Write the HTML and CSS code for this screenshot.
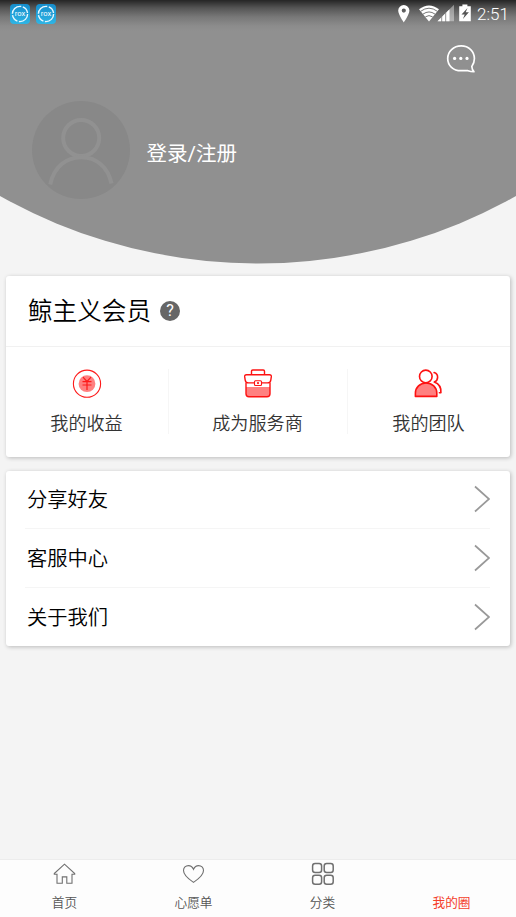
FILE: index.html
```html
<!DOCTYPE html>
<html lang="zh-CN">
<head>
<meta charset="utf-8">
<meta name="viewport" content="width=device-width, initial-scale=1">
<title>我的圈</title>
<link rel="stylesheet" href="styles.css">
</head>
<body>
<header class="hero">
  <div class="status">
    <div class="apps">
      <span class="app"><svg viewBox="0 0 20 20"><circle class="ring" cx="10" cy="10" r="7.6"/><text x="10" y="12.300" text-anchor="middle">rox</text></svg></span>
      <span class="app"><svg viewBox="0 0 20 20"><circle class="ring" cx="10" cy="10" r="7.6"/><text x="10" y="12.300" text-anchor="middle">rox</text></svg></span>
    </div>
    <svg class="signals" width="76" height="20" viewBox="396 4 76 20" fill="#fff">
      <path fill-rule="evenodd" d="M403.800 5a5.600 5.600 0 0 0-5.600 5.600c0 4.200 5.600 11.800 5.600 11.800s5.600-7.600 5.600-11.800a5.600 5.600 0 0 0-5.600-5.600zm0 3.500a2.100 2.100 0 1 1 0 4.200 2.100 2.100 0 0 1 0-4.200z"/>
      <path d="M419 9.300Q429 1.700 439 9.300L429 21.400z"/>
      <path d="M420.500 11.400Q429 5 437.500 11.400M423 14.100Q429 9.800 435 14.100M425.400 16.800Q429 14.400 432.600 16.800" fill="none" stroke="#777" stroke-width="1"/>
      <path d="M437.500 21.300L454 4.800V21.300z" opacity=".4"/>
      <path d="M437.500 21.300L449.500 9.300V21.300z"/>
      <path d="M441.700 16v6M445.700 12v10" stroke="#777" stroke-width=".8"/>
      <path d="M462.400 4.500h5v1.700h3.400v15.100h-11.600V6.200h3.200z"/>
      <path d="M467.500 8l-6 6.500h3.200l-1.800 4.500 6-6.700h-3.200z" fill="#555"/>
    </svg>
    <span class="clock">2:51</span>
  </div>
  <div class="actions">
    <svg width="30" height="30" viewBox="446 44 30 30" fill="none" stroke="#fff" stroke-width="1.700" stroke-linecap="round" stroke-linejoin="round">
      <path d="M471.800 66.500C473.600 64.200 474.400 61.500 474.400 58.600c0-7.200-5.500-12.700-13.200-12.700s-13.500 5.500-13.500 12.600 5.600 12.200 13.300 12.200h7q2.500 1 5.900 1-1.800-1.800-2.100-5.200z"/>
      <g fill="#fff" stroke="none"><circle cx="454.600" cy="58.400" r="1.600"/><circle cx="460.800" cy="58.400" r="1.600"/><circle cx="467" cy="58.400" r="1.600"/></g>
    </svg>
  </div>
  <div class="profile">
    <svg class="avatar" width="98" height="98" viewBox="0 0 98 98" fill="none" stroke="#919191" stroke-width="4">
      <circle cx="49" cy="49" r="49" fill="#888" stroke="none"/>
      <circle cx="49.200" cy="37" r="18"/>
      <path d="M18.200 83.500C22 66 34 56.300 49.200 56.300S76 66 79.500 82.500"/>
    </svg>
    <span class="login">登录/注册</span>
  </div>
</header>

<main>
  <section class="card member">
    <div class="member-head">
      <h1>鲸主义会员</h1>
      <span class="help">?</span>
    </div>
    <div class="member-items">
      <div class="item">
        <svg width="30" height="30" viewBox="0 0.300 30 30" fill="none" stroke="#fd1a1a">
          <circle cx="15" cy="15" r="13.600" stroke-width="1.100"/>
          <circle cx="15" cy="15" r="8.400" fill="#ff8080" stroke="none"/>
          <path d="M11 8.500l4 4.300 4-4.300M10.500 13h9M10.500 16.300h9M15 12.800v8.400" stroke-width="1.200"/>
        </svg>
        <span>我的收益</span>
      </div>
      <div class="item wide">
        <svg width="30" height="30" viewBox="0 0.500 30 30" fill="none" stroke="#fd1212" stroke-width="1.400" stroke-linejoin="round">
          <path d="M3 18.500h24v6.800a3 3 0 0 1-3 3H6a3 3 0 0 1-3-3z" fill="#ff8080" stroke="none"/>
          <path d="M8.500 6.200V2.800q0-1.300 1.300-1.300h10.400q1.300 0 1.300 1.300v3.400M3 14v11.300a3 3 0 0 0 3 3h18a3 3 0 0 0 3-3V14"/>
          <path d="M3.500 6.200h23q2 0 1.800 2.200l-.5 3.200q-.4 2.800-3.400 2.800H5.600q-3 0-3.400-2.800l-.5-3.200q-.2-2.200 1.800-2.200z"/>
          <rect x="11.500" y="12.300" width="7" height="4.700" rx="1" fill="#fff" stroke-width="1.100"/>
          <circle cx="15" cy="14.600" r="1.100" fill="#fd1212" stroke="none"/>
        </svg>
        <span>成为服务商</span>
      </div>
      <div class="item">
        <svg width="30" height="30" viewBox="1.200 0.600 30 30" fill="none" stroke="#fd1212" stroke-width="1.600" stroke-linecap="round" stroke-linejoin="round">
          <path d="M2.600 28v-3.200c0-5.800 4.700-10.200 10.700-10.200S24 19 24 24.800V28z" fill="#ff8080"/>
          <circle cx="13" cy="8" r="6.300" fill="#fff"/>
          <path d="M21.300 4.200c4.800 1.400 4.500 7.700.2 9.500 4.500 1.700 7 5.600 6.600 10.600h-1.500"/>
        </svg>
        <span>我的团队</span>
      </div>
    </div>
  </section>

  <section class="card list">
    <div class="row"><span>分享好友</span><svg class="chevron" viewBox="0 0 18 28"><path d="M3 1.500L17 14 3 26.500"/></svg></div>
    <div class="row"><span>客服中心</span><svg class="chevron" viewBox="0 0 18 28"><path d="M3 1.500L17 14 3 26.500"/></svg></div>
    <div class="row"><span>关于我们</span><svg class="chevron" viewBox="0 0 18 28"><path d="M3 1.500L17 14 3 26.500"/></svg></div>
  </section>
</main>

<nav class="tabs">
  <div class="tab">
    <svg viewBox="0.500 0 24 24"><path d="M1.800 11.500L12 2.200l10.200 9.300v.8h-2.700v8.900h-5.200v-6.300H9.800v6.300H4.500v-8.900H1.800z"/></svg>
    <span>首页</span>
  </div>
  <div class="tab">
    <svg viewBox="0.500 0 24 24"><path d="M12 20.400C6.500 16.800 2 13 2 8.600 2 5.600 4.200 3.600 6.900 3.600c2.300 0 4.100 1.400 5.100 3.700 1-2.300 2.800-3.700 5.100-3.700C19.800 3.600 22 5.600 22 8.600c0 4.400-4.500 8.200-10 11.800z"/></svg>
    <span>心愿单</span>
  </div>
  <div class="tab grid-tab">
    <svg viewBox="0 0 24 24"><rect x="1.600" y="1.600" width="9" height="9" rx="2.500"/><rect x="13.200" y="1.600" width="9" height="9" rx="2.500"/><rect x="1.600" y="13.200" width="9" height="9" rx="2.500"/><rect x="13.200" y="13.200" width="9" height="9" rx="2.500"/></svg>
    <span>分类</span>
  </div>
  <div class="tab active">
    <svg viewBox="0 0 24 24"></svg>
    <span>我的圈</span>
  </div>
</nav>
</body>
</html>
```
FILE: styles.css
```css
* {
  box-sizing: border-box;
}

body {
  margin: 0;
  height: 917px;
  display: flex;
  flex-direction: column;
  overflow: hidden;
  background: #f4f4f4;
  color: #000;
  font-family: Roboto, "Noto Sans CJK SC", sans-serif;
  font-weight: 350;
}

svg {
  display: block;
  flex: none;
}

.hero {
  height: 264px;
  flex: none;
  background: linear-gradient(#252525 0, #555 8px, #787878 17px, #8c8c8c 26px, #909090 31px);
  clip-path: circle(527px at 50% -263.500px);
}

.status {
  height: 28px;
  padding: 4px 7px 0 10px;
  display: flex;
  align-items: flex-start;
}

.apps {
  display: flex;
  gap: 6px;
  margin-right: auto;
}

.app {
  width: 20px;
  height: 20px;
  border-radius: 4px;
  background: linear-gradient(#168dcc, #2eb5e5);
}

.app .ring {
  fill: none;
  stroke: #e6f7ff;
  stroke-width: 1.400;
  stroke-dasharray: 13 1.500 8 1.400;
}

.app text {
  fill: #fff;
  font-size: 7.500px;
  font-weight: 400;
}

.clock {
  width: 32px;
  margin-left: 5px;
  color: #fff;
  font-size: 17px;
  line-height: 21px;
  white-space: nowrap;
}

.actions {
  padding: 16px 40px 0 0;
  display: flex;
  justify-content: flex-end;
}

.profile {
  display: flex;
  align-items: center;
  padding: 27px 0 0 32px;
}

.login {
  margin: 7px 0 0 16.500px;
  color: #fff;
  font-size: 20.500px;
  font-weight: 400;
  line-height: 30px;
}

main {
  flex: 1;
  padding: 12px 6px 0;
}

.card {
  background: #fff;
  border-radius: 3px;
  box-shadow: 1px 1px 4px rgba(0, 0, 0, .24);
}

.member {
  height: 181px;
}

.member-head {
  height: 71px;
  padding-left: 22px;
  display: flex;
  align-items: center;
  border-bottom: 1px solid #f1f1f1;
}

h1 {
  margin: 2px 0 0;
  font-size: 24.600px;
  font-weight: 350;
  line-height: 36px;
}

.help {
  width: 20px;
  height: 20px;
  margin-left: 9px;
  border-radius: 50%;
  background: #666;
  color: #fff;
  font-size: 16px;
  font-weight: 400;
  line-height: 20px;
  text-align: center;
}

.member-items {
  height: 110px;
  padding: 22px 0;
  display: flex;
}

.item {
  width: 162px;
  height: 65px;
  display: flex;
  flex-direction: column;
  align-items: center;
  color: #333;
  font-size: 18.100px;
  line-height: 26px;
}

.item span {
  margin: 12px 1px 0 0;
}

.item.wide {
  width: 180px;
  border: solid #f6f6f6;
  border-width: 0 1px;
}

.list {
  margin-top: 14px;
  height: 175px;
  padding: 0 20px 0 19px;
}

.row {
  height: 59px;
  padding-left: 2px;
  display: flex;
  justify-content: space-between;
  align-items: center;
  font-size: 20.300px;
  line-height: 30px;
}

.row:first-child {
  height: 57px;
}

.row:first-child .chevron {
  margin-bottom: 2px;
}

.row span {
  padding-top: 1px;
}

.row + .row {
  border-top: 1px solid #f5f5f5;
}

.chevron {
  width: 18px;
  height: 28px;
  fill: none;
  stroke: #999;
  stroke-width: 1.700;
}

.tabs {
  height: 58px;
  flex: none;
  display: flex;
  border-top: 1px solid #ececec;
  background: #fdfdfd;
}

.tab {
  flex: 1;
  display: flex;
  flex-direction: column;
  align-items: center;
  padding-top: 2px;
  color: #555;
  font-size: 12.700px;
  line-height: 18px;
}

.tab svg {
  width: 24px;
  height: 24px;
  fill: none;
  stroke: #707070;
  stroke-width: 1.100;
}

.tab span {
  margin-top: 8px;
}

.grid-tab svg {
  stroke-width: 1.500;
}

.active {
  color: #f4402a;
  font-weight: 400;
}
```
